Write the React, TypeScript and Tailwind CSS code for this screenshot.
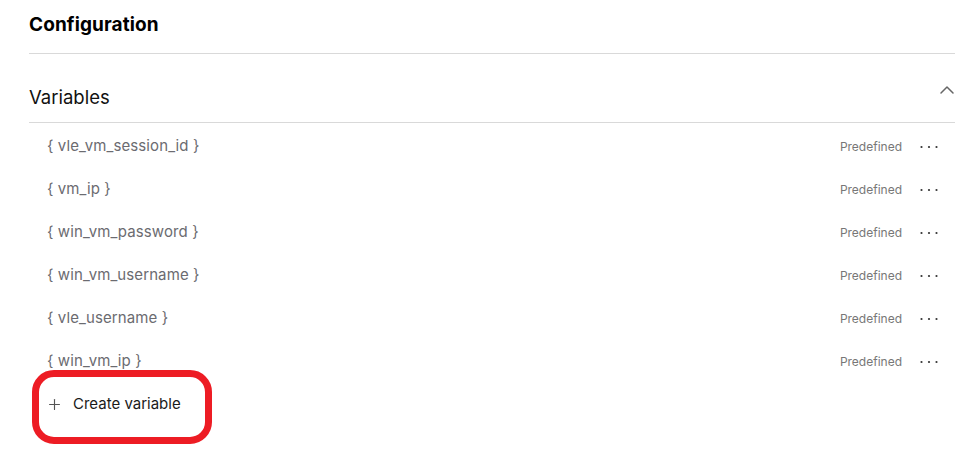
import { ChevronUp, Plus } from "lucide-react";

const variables = [
  "vle_vm_session_id",
  "vm_ip",
  "win_vm_password",
  "win_vm_username",
  "vle_username",
  "win_vm_ip",
];

// three small dots for the row menu
const Dots = () => (
  <svg width="18" height="4" viewBox="0 0 18 4" className="text-[#333]">
    <circle cx="1.5" cy="2" r="1.1" fill="currentColor" />
    <circle cx="9" cy="2" r="1.1" fill="currentColor" />
    <circle cx="16.5" cy="2" r="1.1" fill="currentColor" />
  </svg>
);

const App = () => {
  return (
    <div className="w-[969px] h-[456px] bg-white pl-[29px] pr-[14px] font-['Inter','Liberation_Sans',sans-serif] overflow-hidden">
      {/* Title */}
      <div className="h-[54px] border-b border-[#d9d9d9] pt-[13px]">
        <h2 className="text-[19px] leading-[24px] font-bold text-black tracking-[0.1px]">
          Configuration
        </h2>
      </div>

      {/* Variables header */}
      <div className="h-[69px] border-b border-[#d9d9d9] flex items-end justify-between pb-[10px]">
        <h3 className="text-[18.5px] leading-[28px] text-[#111] mb-[1px]">Variables</h3>
        <ChevronUp
          size={24}
          className="text-[#666] mb-[10px] mr-[-4px]"
          strokeWidth={1.5}
        />
      </div>

      {/* Rows */}
      <div className="pt-[2px]">
        {variables.map((v) => (
          <div key={v} className="h-[43px] flex items-center justify-between pl-[18px] pr-[17px]">
            <span className="text-[15px] text-[#6b6b70] tracking-[0.1px]">{`{ ${v} }`}</span>
            <div className="flex items-center gap-[18px]">
              <span className="text-[12px] text-[#777]">Predefined</span>
              <Dots />
            </div>
          </div>
        ))}

        {/* Create */}
        <div className="relative h-[43px] flex items-center pl-[17px] gap-[10px]">
          <Plus size={17} className="text-[#555]" strokeWidth={1.6} />
          <span className="text-[15px] text-[#1a1a1a]">Create variable</span>
          {/* red annotation */}
          <div className="absolute left-[3px] top-[-13px] w-[180px] h-[74px] border-[7px] border-[#ed1c24] rounded-[22px]" />
        </div>
      </div>
    </div>
  );
};

export default App;
